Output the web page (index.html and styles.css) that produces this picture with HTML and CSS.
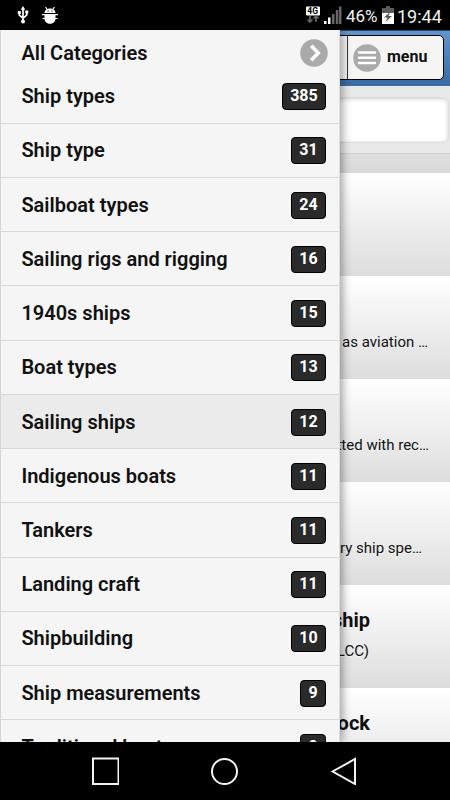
FILE: index.html
```html
<!DOCTYPE html>
<html lang="en">
<head>
<meta charset="utf-8">
<title>All Categories</title>
<link rel="stylesheet" href="styles.css">
</head>
<body>
<header class="status">
  <svg class="status-left" width="70" height="30" viewBox="0 0 70 30" fill="none" stroke="#fff">
    <path d="M23 9v12M19.300 12v3.200l3.700 3M26.700 11v4.200l-3.700 3" stroke-width="1.700"/>
    <path d="M20.700 9.800 23 6l2.300 3.800zM17.800 11h3v3h-3zM25.300 10.500h3v3h-3z" fill="#fff" stroke="none"/>
    <circle cx="23" cy="21.500" r="2" fill="#fff" stroke="none"/>
    <path d="M44.500 13c0-6 11-6 11 0zM44.500 14.500h11v4c0 7-11 7-11 0z" fill="#fff" stroke="none"/>
    <path d="m45.500 7 2 3m7-3-2 3M42 14.600h16M42.500 18.500h15" stroke-width="1.200"/>
    <path d="M47.500 11h1.200M51.500 11h1.200" stroke="#000" stroke-width="1.200"/>
  </svg>
  <svg class="signal" width="36" height="30" viewBox="0 0 36 30">
    <rect x="0" y="6.500" width="14" height="9" rx="1" fill="#fff"/>
    <text x="1.300" y="14.200" class="net">4G</text>
    <path d="M4 16v6M1.500 19.500 4 22l2.500-2.500M10 22v-6M7.500 18.500 10 16l2.500 2.500" fill="none" stroke="#666" stroke-width="1.700"/>
    <path d="M18 21h2.500v3H18zM22 17.500h2.500V24H22z" fill="#fff"/>
    <path d="M26 14h2.500v10H26zM29.800 10h2.500v14h-2.500zM33 6.500h2.500V24H33z" fill="#666"/>
  </svg>
  <span class="percent">46%</span>
  <svg class="battery" width="12" height="18" viewBox="0 0 12 18">
    <path d="M4 0h4v2h4v5H0V2h4z" fill="#5b5b5b"/>
    <path d="M0 7h12v11H0z" fill="#fff"/>
    <path d="M8 6 2 11.500h3.500L3.500 16l6.500-6H6.500z" fill="#555"/>
  </svg>
  <span class="clock">19:44</span>
</header>

<div class="screen">
  <main class="page">
    <div class="toolbar">
      <div class="menu-button">
        <svg width="28" height="28" viewBox="0 0 28 28"><circle cx="14" cy="14" r="13.800" fill="#aaa"/><path d="M6 8.500h16M6 13.700h16M6 18.900h16" stroke="#fff" stroke-width="2.500" stroke-linecap="round"/></svg>
        <span>menu</span>
      </div>
    </div>
    <div class="search"><div class="search-box"></div></div>
    <div class="gap"></div>
    <article class="card"></article>
    <article class="card"><h2></h2><p class="end-428">such as aviation …</p></article>
    <article class="card"><h2></h2><p class="end-429">fitted with rec…</p></article>
    <article class="card"><h2></h2><p class="end-422">ary ship spe…</p></article>
    <article class="card"><h2>ship</h2><p class="end-369">(VLCC)</p></article>
    <article class="card"><h2>dock</h2><p></p></article>
  </main>

  <aside class="panel">
    <div class="panel-head"><span>All Categories</span>
      <svg width="28" height="28" viewBox="0 0 28 28"><circle cx="14" cy="14" r="13.800" fill="#aaa"/><path d="m11.200 6.800 7 7.200-7 7.200" fill="none" stroke="#fff" stroke-width="3.700"/></svg>
    </div>
    <ul class="list">
      <li>Ship types<b>385</b></li>
      <li>Ship type<b>31</b></li>
      <li>Sailboat types<b>24</b></li>
      <li>Sailing rigs and rigging<b>16</b></li>
      <li>1940s ships<b>15</b></li>
      <li>Boat types<b>13</b></li>
      <li class="active">Sailing ships<b>12</b></li>
      <li>Indigenous boats<b>11</b></li>
      <li>Tankers<b>11</b></li>
      <li>Landing craft<b>11</b></li>
      <li>Shipbuilding<b>10</b></li>
      <li>Ship measurements<b>9</b></li>
      <li>Traditional boats<b>9</b></li>
    </ul>
  </aside>
</div>

<nav class="navbar">
  <svg width="28" height="28" viewBox="0 0 28 28"><path d="M2 1.500h25.500v25.500H2z"/></svg>
  <svg width="28" height="28" viewBox="0 0 28 28"><circle cx="14.500" cy="14.500" r="12.500"/></svg>
  <svg width="28" height="28" viewBox="0 0 28 28"><path d="M26 2v25L3.700 14.500z"/></svg>
</nav>
</body>
</html>
```

FILE: styles.css
```css
* { box-sizing: border-box; }
body {
  margin: 0;
  width: 450px;
  height: 800px;
  overflow: hidden;
  display: flex;
  flex-direction: column;
  font-family: Roboto, "Liberation Sans", sans-serif;
  color: #111;
  background: #000;
}
.status {
  flex: 0 0 30px;
  display: flex;
  align-items: center;
  color: #f2f2f2;
}
.signal { margin-left: 236px; }
.net { font: 700 8.5px Roboto, sans-serif; fill: #000; }
.percent { margin-left: 4px; width: 32px; font-size: 17px; white-space: nowrap; padding-top: 2px; }
.battery { margin-left: 4px; }
.clock { margin-left: 3px; font-size: 18px; padding-top: 2px; white-space: nowrap; }

.screen {
  flex: 0 0 712px;
  position: relative;
  overflow: hidden;
  background: #ddd;
}
.page { display: flex; flex-direction: column; align-items: stretch; }
.toolbar {
  flex: 0 0 56px;
  display: flex;
  justify-content: flex-end;
  padding: 4px 6px 5px 0;
  border-top: 1px solid #26496f;
  border-bottom: 1px solid #456f9d;
  background: linear-gradient(#6295cd, #396ba8);
}
.menu-button {
  width: 231px;
  height: 45px;
  display: flex;
  align-items: center;
  padding-left: 139px;
  border: 1px solid #000;
  border-radius: 5px;
  background: linear-gradient(90deg, transparent 133px, #333 133px, #333 134px, transparent 134px), #f5f5f5;
}
.menu-button span { margin: 0 0 3px 6px; font-size: 16px; font-weight: 700; }
.search {
  flex: 0 0 68px;
  padding: 11px 1px 10px;
  background: #e9e9e9;
  border-bottom: 1px solid #d0d0d0;
}
.search-box {
  height: 46px;
  border: 1px solid #ddd;
  border-radius: 6px;
  background: #fff;
  box-shadow: inset 0 1px 4px rgba(0,0,0,.2);
}
.gap { flex: 0 0 18.5px; background: linear-gradient(#dedede, #dadada); }
.card {
  flex: 0 0 103px;
  border-top: 1px solid #fff;
  padding: 20px 0 0;
  text-align: right;
  background: linear-gradient(#fff, #ddd);
  text-shadow: 0 1px 0 #f3f3f3;
}
.card h2 { margin: 0; height: 28px; padding-right: 80px; font-size: 20px; line-height: 28px; font-weight: 700; }
.card p { margin: 6px 0 0; font-size: 15px; line-height: 22px; white-space: nowrap; }
.end-428 { padding-right: 22px; }
.end-429 { padding-right: 21px; }
.end-422 { padding-right: 28px; }
.end-369 { padding-right: 81px; }

.panel {
  position: absolute;
  left: 0;
  top: 0;
  width: 340px;
  height: 712px;
  overflow: hidden;
  background: #f5f5f5;
  border-left: 1px solid #d5d5d5;
  border-right: 1px solid #ddd;
  box-shadow: 2px 0 9px rgba(0,0,0,.4);
  font-size: 20px;
  font-weight: 600;
}
.panel-head {
  height: 39.6px;
  padding: 8px 11px 0 20.4px;
  display: flex;
  justify-content: space-between;
}
.panel-head svg { margin-top: 1px; }
.panel-head span { line-height: 31px; }
.list { margin: 0; padding: 0; list-style: none; }
.list li {
  height: 54.22px;
  display: flex;
  align-items: center;
  justify-content: space-between;
  padding: 0 13px 0 20.4px;
  border-bottom: 1px solid #d9d9d9;
}
.list .active { background: #ebebeb; }
.list b {
  height: 27px;
  margin-top: 1px;
  padding: 0 7.3px;
  border: 1px solid #000;
  border-radius: 4px;
  background: #2a2a2a;
  color: #fff;
  font-size: 16px;
  line-height: 23px;
  font-weight: 700;
}
.navbar {
  flex: 0 0 58px;
  display: flex;
  padding: 14.5px 0 0 91px;
  gap: 91px;
}
.navbar svg { fill: none; stroke: #f4f4f4; stroke-width: 2; }
```
